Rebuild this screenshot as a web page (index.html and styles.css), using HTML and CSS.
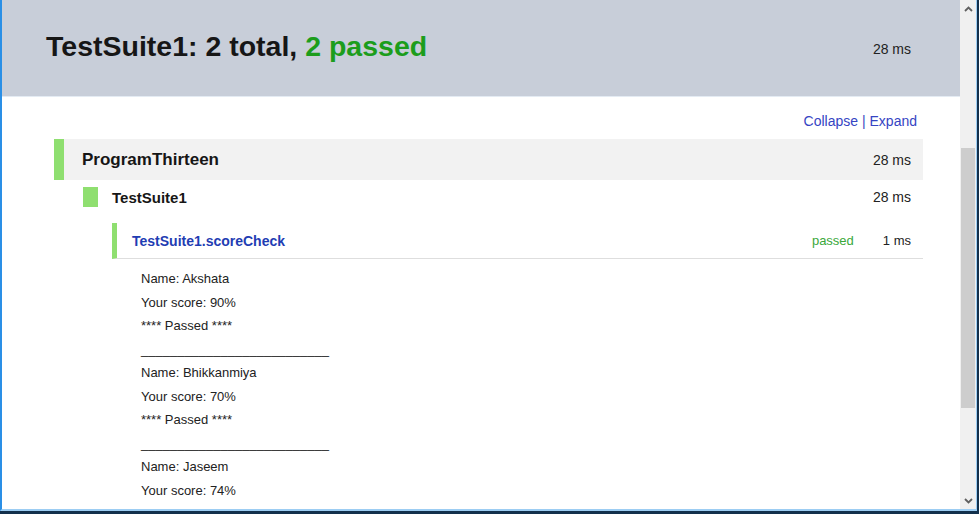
FILE: index.html
```html
<!DOCTYPE html>
<html>
<head>
<meta charset="utf-8">
<title>TestSuite1</title>
<link rel="stylesheet" href="styles.css">
</head>
<body>
<div class="window">
  <div class="page">
    <header class="summary">
      <h1 class="summary-title">TestSuite1: 2 total, <span class="ok">2 passed</span></h1>
      <span class="summary-time">28 ms</span>
    </header>
    <div class="toolbar"><a class="link">Collapse</a> <span class="sep">|</span> <a class="link">Expand</a></div>
    <div class="tree">
      <div class="program-row">
        <span class="program-name">ProgramThirteen</span>
        <span class="dur">28 ms</span>
      </div>
      <div class="suite-row">
        <span class="suite-mark"></span>
        <span class="suite-name">TestSuite1</span>
        <span class="dur">28 ms</span>
      </div>
      <div class="test-head">
        <span class="test-name">TestSuite1.scoreCheck</span>
        <span class="status">passed</span>
        <span class="dur small">1 ms</span>
      </div>
      <div class="output">
        <div class="line">Name: Akshata</div>
        <div class="line">Your score: 90%</div>
        <div class="line">**** Passed ****</div>
        <div class="line">__________________________</div>
        <div class="line">Name: Bhikkanmiya</div>
        <div class="line">Your score: 70%</div>
        <div class="line">**** Passed ****</div>
        <div class="line">__________________________</div>
        <div class="line">Name: Jaseem</div>
        <div class="line">Your score: 74%</div>
        <div class="line">**** Passed ****</div>
      </div>
    </div>
  </div>
  <div class="scrollbar">
    <div class="sb-btn">
      <svg width="9" height="6" viewBox="0 0 9 6"><path d="M1 5 L4.5 1.5 L8 5" fill="none" stroke="#606060" stroke-width="1.8"/></svg>
    </div>
    <div class="sb-track">
      <div class="sb-gap"></div>
      <div class="sb-thumb"></div>
    </div>
    <div class="sb-btn">
      <svg width="9" height="6" viewBox="0 0 9 6"><path d="M1 1 L4.5 4.5 L8 1" fill="none" stroke="#606060" stroke-width="1.8"/></svg>
    </div>
  </div>
</div>
</body>
</html>
```

FILE: styles.css
```css
html, body {
  margin: 0;
  padding: 0;
}
body {
  background: #13304c;
  width: 979px;
  height: 514px;
  overflow: hidden;
  font-family: "Liberation Sans", Arial, sans-serif;
  color: #1a1a1a;
}
.window {
  box-sizing: border-box;
  width: 977px;
  height: 511px;
  display: flex;
  background: #ffffff;
  border-left: 2px solid #2a8fe6;
  border-right: 1px solid #9ccdf3;
  border-bottom: 2px solid #9ccdf3;
}
.page {
  flex: 1;
  overflow: hidden;
}
.summary {
  height: 97px;
  box-sizing: border-box;
  background: #c8ced9;
  border-bottom: 1px solid #e4ebf3;
  display: flex;
  align-items: center;
  justify-content: space-between;
  padding: 0 49px 0 44px;
}
.summary-title {
  margin: 0 0 4px 0;
  font-size: 28.5px;
  font-weight: bold;
  color: #161616;
}
.ok {
  color: #1c9d1c;
}
.summary-time {
  font-size: 14px;
  color: #222;
  margin-top: 2px;
}
.toolbar {
  margin: 16px 43px 10px 0;
  text-align: right;
  font-size: 14px;
  line-height: 16px;
  color: #3a4ac2;
}
.link {
  color: #3544c3;
  cursor: pointer;
}
.sep {
  color: #3a4ac2;
}
.tree {
  margin: 0 37px 0 52px;
}
.program-row {
  height: 41px;
  display: flex;
  align-items: center;
  background: #f2f2f2;
  border-left: 10px solid #8fdf70;
  padding: 0 12px 0 18px;
}
.program-name {
  flex: 1;
  font-size: 17px;
  font-weight: bold;
  color: #161616;
}
.dur {
  font-size: 14px;
  color: #222;
}
.dur.small {
  font-size: 13px;
}
.suite-row {
  display: flex;
  align-items: center;
  padding: 7px 12px 16px 29px;
}
.suite-mark {
  width: 15px;
  height: 20px;
  background: #8fdf70;
  margin-right: 14px;
}
.suite-name {
  flex: 1;
  font-size: 15px;
  font-weight: bold;
  color: #161616;
}
.test-head {
  margin-left: 58px;
  height: 35px;
  display: flex;
  align-items: center;
  border-left: 5px solid #8fdf70;
  border-bottom: 1px solid #dedede;
  padding: 0 12px 0 15px;
}
.test-name {
  flex: 1;
  font-size: 14px;
  font-weight: bold;
  color: #1f3db3;
}
.status {
  font-size: 13px;
  color: #3aa83a;
  margin-right: 29px;
}
.output {
  margin-left: 87px;
  padding-top: 8px;
  font-size: 13px;
  line-height: 23.5px;
  color: #222;
}
.line {
  white-space: pre;
}
.scrollbar {
  width: 16px;
  background: #f0f0f0;
  display: flex;
  flex-direction: column;
}
.sb-btn {
  height: 17px;
  display: flex;
  align-items: center;
  justify-content: center;
}
.sb-track {
  flex: 1;
  display: flex;
  flex-direction: column;
}
.sb-gap {
  height: 131px;
}
.sb-thumb {
  height: 260px;
  margin: 0 1px;
  background: #cdcdcd;
}
```
